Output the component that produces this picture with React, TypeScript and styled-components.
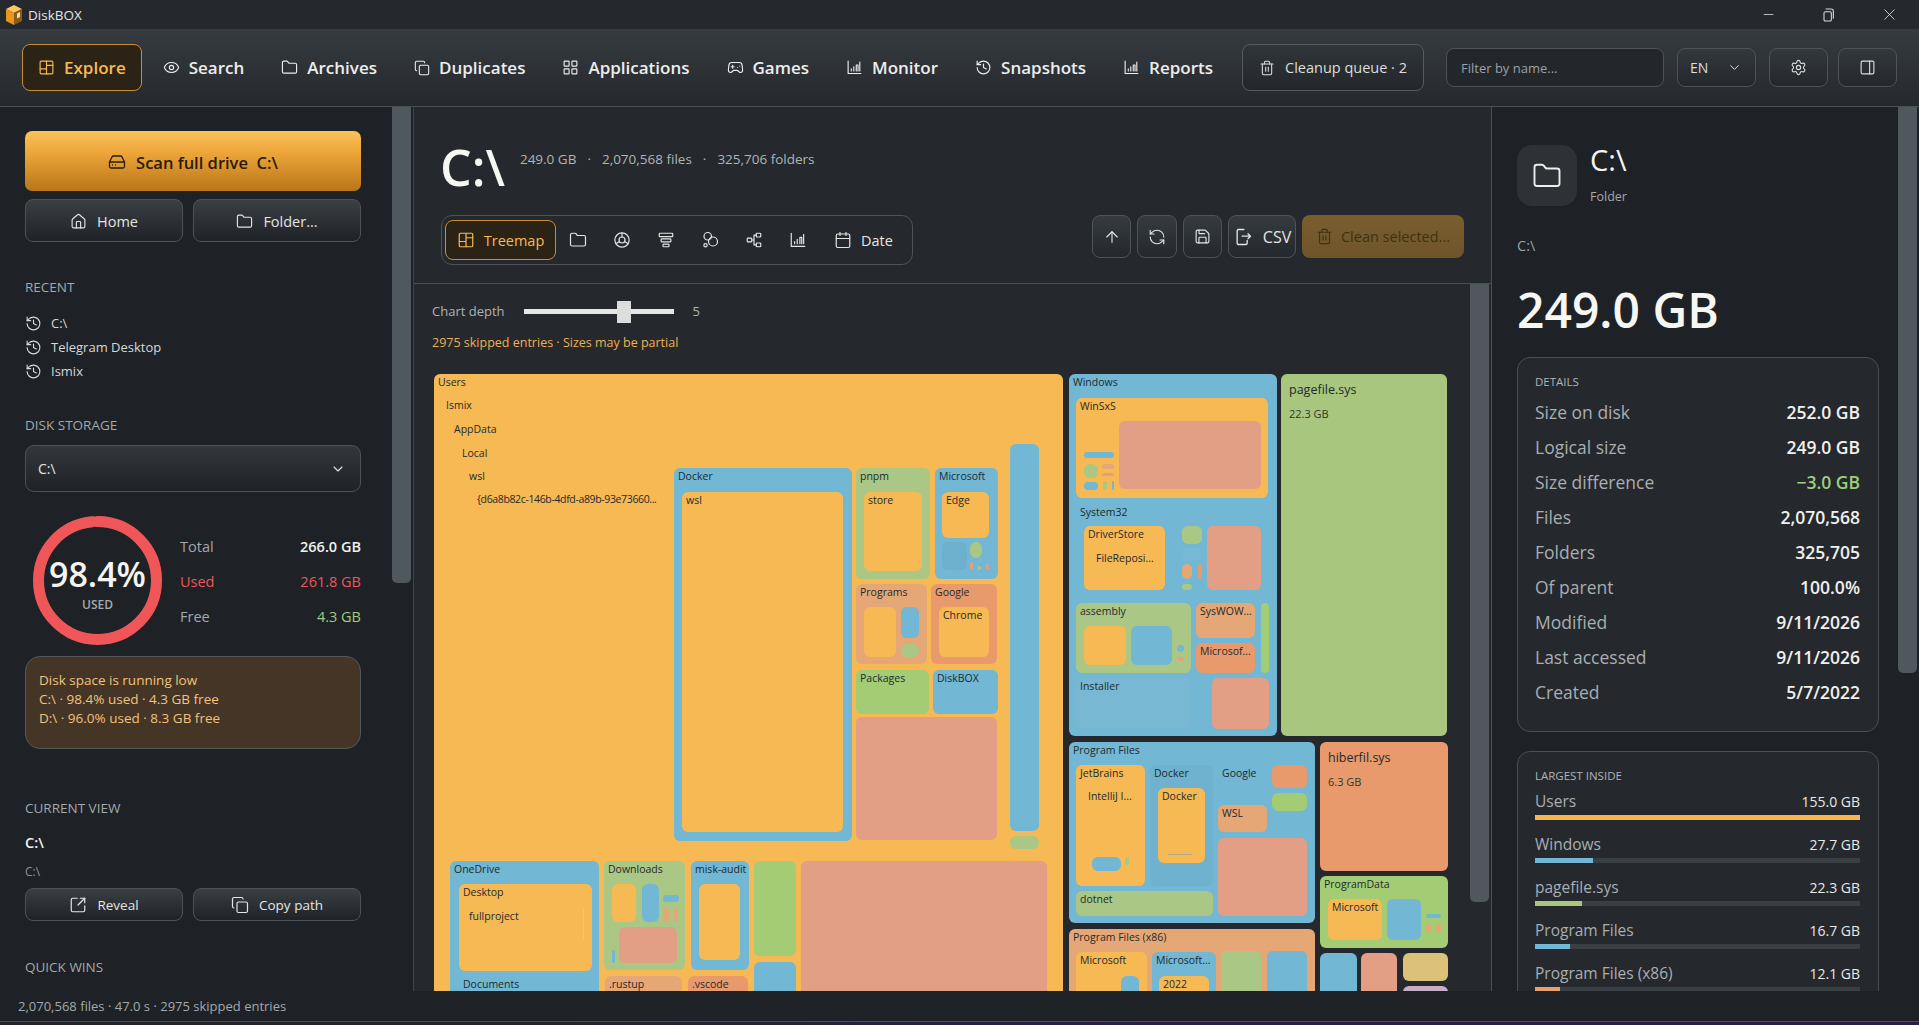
import React from 'react';
import styled, { createGlobalStyle } from 'styled-components';
import {
  ArrowUp, Calendar, ChevronDown, Copy, Eye, Folder, Gamepad2, HardDrive, History, Home, LayoutGrid,
  Minus, PanelRight, RefreshCcw, Save, Settings, SquareArrowOutUpRight, Trash2, X,
} from 'lucide-react';

const GlobalStyle = createGlobalStyle`
  html, body { margin: 0; padding: 0; height: 100%; background: #1e2125; overflow: hidden; }
  body { font-family: "Open Sans", "Noto Sans", sans-serif; color: #e8e8e6; }
  * { box-sizing: border-box; }
`;

const Shell = styled.div`
  display: flex;
  flex-direction: column;
  height: 100vh;
  overflow: hidden;
`;

const TitleBar = styled.div`
  height: 29px;
  flex: none;
  display: flex;
  align-items: center;
  background: #25292d;
  padding-left: 5px;
`;

const AppName = styled.span`
  margin-left: 5px;
  font-size: 13.5px;
  color: #e4e6e6;
`;

const WindowControls = styled.div`
  margin-left: auto;
  display: flex;
  align-items: center;
  gap: 44px;
  padding-right: 20px;
  color: #d9dcdd;
`;

const NavBar = styled.nav`
  height: 78px;
  flex: none;
  display: flex;
  align-items: center;
  gap: 5px;
  padding: 0 22px;
  background: linear-gradient(180deg, #363b40 0%, #25292d 100%);
  border-bottom: 1px solid #4a4f54;
`;

const NavItem = styled.div<{ $active?: boolean }>`
  height: 47px;
  display: flex;
  align-items: center;
  gap: 9px;
  padding: 0 15px;
  border-radius: 8px;
  font-size: 17px;
  font-weight: 600;
  white-space: nowrap;
  color: ${p => (p.$active ? '#f8b955' : '#eceded')};
  background: ${p => (p.$active ? '#2a2316' : 'transparent')};
  border: 1px solid ${p => (p.$active ? '#c98d35' : 'transparent')};
  svg { flex: none; }
`;

const QueueButton = styled.div`
  height: 47px;
  width: 182px;
  margin-left: auto;
  display: flex;
  align-items: center;
  justify-content: center;
  gap: 10px;
  border-radius: 8px;
  border: 1px solid #565b60;
  font-size: 14.5px;
  color: #dcdede;
  background: linear-gradient(180deg, #30353a 0%, #23272b 100%);
`;

const FilterInput = styled.div`
  width: 218px;
  height: 39px;
  margin-left: 17px;
  display: flex;
  align-items: center;
  padding-left: 14px;
  border-radius: 8px;
  border: 1px solid #4e5358;
  background: #23262b;
  font-size: 13px;
  color: #9ba0a4;
`;

const LangSelect = styled.div`
  width: 79px;
  height: 39px;
  margin-left: 8px;
  display: flex;
  align-items: center;
  justify-content: space-between;
  padding: 0 13px 0 12px;
  border-radius: 8px;
  border: 1px solid #4e5358;
  background: linear-gradient(180deg, #33383d 0%, #24282c 100%);
  font-size: 14px;
  color: #dcdede;
`;

const SquareTool = styled.div<{ $gap: number }>`
  width: 59px;
  height: 39px;
  margin-left: ${p => p.$gap}px;
  display: flex;
  align-items: center;
  justify-content: center;
  border-radius: 8px;
  border: 1px solid #4e5358;
  background: linear-gradient(180deg, #33383d 0%, #24282c 100%);
  color: #dcdede;
`;

const Body = styled.div`
  flex: 1;
  min-height: 0;
  display: flex;
`;

const Scrollbar = styled.div<{ $top?: number; $height: number }>`
  position: absolute;
  right: 2px;
  top: ${p => p.$top ?? 0}px;
  width: 19px;
  height: ${p => p.$height}px;
  background: #50575d;
  border-radius: 0 0 5px 5px;
`;

const Sidebar = styled.aside`
  position: relative;
  width: 413px;
  flex: none;
  overflow: hidden;
  background: #1e2125;
  padding: 24px 52px 0 25px;
`;

const ScanButton = styled.div`
  height: 60px;
  padding-top: 2px;
  display: flex;
  align-items: center;
  justify-content: center;
  gap: 10px;
  border-radius: 7px;
  background: linear-gradient(180deg, #fac25c 0%, #eda63a 35%, #b97618 100%);
  color: #2b1a04;
  font-size: 16.5px;
  font-weight: 600;
`;

const ButtonRow = styled.div`
  display: grid;
  grid-template-columns: 158px 168px;
  gap: 10px;
  margin-top: 8px;
`;

const GhostButton = styled.div<{ $small?: boolean }>`
  height: ${p => (p.$small ? 33 : 43)}px;
  padding-top: 1px;
  display: flex;
  align-items: center;
  justify-content: center;
  gap: 10px;
  border-radius: 8px;
  border: 1px solid #4e5358;
  background: linear-gradient(180deg, #3a3f44 0%, #1f2226 100%);
  font-size: ${p => (p.$small ? 13.5 : 14.5)}px;
  color: #e3e5e5;
`;

const SectionLabel = styled.div<{ $top: number }>`
  margin-top: ${p => p.$top}px;
  font-size: 13.5px;
  line-height: 18px;
  font-weight: 500;
  color: #a3a9ac;
`;

const RecentList = styled.div`
  margin-top: 15px;
  display: flex;
  flex-direction: column;
`;

const RecentRow = styled.div`
  height: 24px;
  display: flex;
  align-items: center;
  gap: 9px;
  font-size: 13px;
  color: #d6d9d9;
  svg { flex: none; margin-left: 0; }
`;

const DriveSelect = styled.div`
  height: 47px;
  margin-top: 11px;
  display: flex;
  align-items: center;
  justify-content: space-between;
  padding: 0 14px 0 12px;
  border-radius: 9px;
  border: 1px solid #4e5358;
  background: linear-gradient(180deg, #33383d 0%, #1f2226 100%);
  font-size: 14px;
  color: #e3e5e5;
`;

const DiskRow = styled.div`
  display: flex;
  align-items: center;
  margin-top: 24px;
  height: 129px;
`;

const Ring = styled.div`
  position: relative;
  width: 129px;
  height: 129px;
  margin-left: 8px;
  flex: none;
`;

const RingText = styled.div`
  position: absolute;
  inset: 0;
  display: flex;
  flex-direction: column;
  align-items: center;
  padding-top: 36px;
`;

const RingValue = styled.div`
  font-size: 34px;
  line-height: 44px;
  font-weight: 600;
  color: #f4f4f2;
`;

const RingCaption = styled.div`
  margin-top: 1px;
  font-size: 12px;
  line-height: 16px;
  font-weight: 600;
  color: #a3a9ac;
`;

const DiskStats = styled.div`
  flex: 1;
  margin: 2px 0 0 18px;
  display: flex;
  flex-direction: column;
  gap: 16px;
`;

const DiskStat = styled.div<{ $tone?: string; $value?: string }>`
  display: flex;
  justify-content: space-between;
  font-size: 14.5px;
  line-height: 19px;
  color: ${p => p.$tone ?? '#a3a9ac'};
  b { font-weight: ${p => (p.$value ? 400 : 600)}; color: ${p => p.$value ?? '#f0f0ee'}; }
`;

const LowDiskBox = styled.div`
  margin-top: 11px;
  height: 93px;
  padding: 14px 13px;
  border-radius: 15px;
  border: 1px solid #53585b;
  background: #443527;
  font-size: 13.5px;
  line-height: 19px;
  font-weight: 500;
  color: #f3c27c;
`;

const ViewName = styled.div`
  margin-top: 16px;
  font-size: 14.5px;
  line-height: 20px;
  font-weight: 600;
  color: #f2f2f0;
`;

const ViewPath = styled.div`
  margin-top: 11px;
  font-size: 12px;
  line-height: 16px;
  color: #8e9498;
`;

const Center = styled.main`
  position: relative;
  width: 1079px;
  flex: none;
  display: flex;
  flex-direction: column;
  background: #25282c;
  border-left: 1px solid #3e4347;
  border-right: 1px solid #4a4f54;
`;

const CenterHeader = styled.header`
  height: 177px;
  flex: none;
  padding: 33px 27px 0 27px;
  border-bottom: 1px solid #4a4f54;
`;

const TitleRow = styled.div`
  display: flex;
  height: 75px;
`;

const BigPath = styled.h1`
  margin: 2px 0 0 -1px;
  font-size: 50px;
  line-height: 50px;
  font-weight: 600;
  color: #f6f6f3;
`;

const MetaRow = styled.div`
  margin: 10px 0 0 15px;
  display: flex;
  gap: 11px;
  font-size: 13.5px;
  line-height: 18px;
  color: #b0b5b8;
`;

const ToolRow = styled.div`
  display: flex;
  justify-content: space-between;
  align-items: flex-start;
`;

const ViewTabs = styled.div`
  width: 472px;
  height: 50px;
  display: flex;
  align-items: center;
  padding: 0 3px;
  border-radius: 11px;
  border: 1px solid #4e5358;
`;

const ViewTab = styled.div<{ $active?: boolean }>`
  height: 40px;
  width: ${p => (p.$active ? '111px' : '44px')};
  flex: none;
  display: flex;
  align-items: center;
  justify-content: center;
  gap: 9px;
  border-radius: 8px;
  font-size: 14.5px;
  color: ${p => (p.$active ? '#f8b955' : '#e3e5e5')};
  background: ${p => (p.$active ? '#2a2316' : 'transparent')};
  border: 1px solid ${p => (p.$active ? '#c98d35' : 'transparent')};
`;

const DateTab = styled(ViewTab)`
  width: auto;
  margin-left: 13px;
`;

const ActionGroup = styled.div`
  display: flex;
  gap: 6px;
`;

const ActionButton = styled.div<{ $width: number }>`
  width: ${p => p.$width}px;
  height: 43px;
  display: flex;
  align-items: center;
  justify-content: center;
  gap: 10px;
  border-radius: 8px;
  border: 1px solid #4e5358;
  background: linear-gradient(180deg, #363b40 0%, #24282c 100%);
  font-size: 16px;
  color: #e3e5e5;
`;

const CleanButton = styled.div`
  width: 162px;
  height: 43px;
  display: flex;
  align-items: center;
  justify-content: center;
  gap: 8px;
  border-radius: 8px;
  background: linear-gradient(180deg, #7a5e30 0%, #6e5429 100%);
  font-size: 14.5px;
  color: #3f3214;
`;

const ChartArea = styled.div`
  flex: 1;
  min-height: 0;
  overflow: hidden;
  padding: 17px 0 0 18px;
`;

const DepthRow = styled.div`
  height: 20px;
  display: flex;
  align-items: center;
  font-size: 13px;
  color: #aeb3b6;
`;

const DepthTrack = styled.div`
  position: relative;
  width: 150px;
  height: 5px;
  margin: 0 19px 0 19px;
  background: #e6e7e5;
`;

const DepthThumb = styled.div`
  position: absolute;
  left: 93px;
  top: -8px;
  width: 14px;
  height: 22px;
  background: #dcdedc;
`;

const PartialNote = styled.div`
  margin-top: 12px;
  height: 20px;
  line-height: 20px;
  font-size: 12.5px;
  color: #eeb052;
`;

const Canvas = styled.div`
  position: relative;
  margin: 21px 0 0 2px;
  width: 1020px;
  height: 700px;
`;

type NodeBoxProps = { $x: number; $y: number; $w: number; $h: number; $c: string };

const NodeBox = styled.div.attrs<NodeBoxProps>(p => ({
  style: { left: p.$x, top: p.$y, width: p.$w, height: p.$h, background: p.$c },
}))<NodeBoxProps>`
  position: absolute;
  border-radius: 6px;
  overflow: hidden;
`;

const NodeLabel = styled.div<{ $big?: boolean; $tight?: boolean }>`
  padding: ${p => (p.$big ? '8px 8px' : '0 4px')};
  font-size: ${p => (p.$big ? '12.5px' : '10.5px')};
  letter-spacing: ${p => (p.$tight ? '-0.36px' : '0')};
  line-height: 16px;
  white-space: nowrap;
  color: #1f2a2c;
`;

const NodeSize = styled.div`
  padding: 0 8px;
  margin-top: 0;
  font-size: 11px;
  line-height: 16px;
  color: #2b3a28;
`;

const Inspector = styled.aside`
  position: relative;
  flex: 1;
  min-width: 0;
  overflow: hidden;
  background: #1e2125;
  padding: 38px 40px 0 25px;
`;

const InfoHead = styled.div`
  display: flex;
  gap: 13px;
`;

const FolderTile = styled.div`
  width: 60px;
  height: 61px;
  display: flex;
  align-items: center;
  justify-content: center;
  border-radius: 15px;
  background: #2e3237;
  color: #eeeeec;
`;

const InfoName = styled.div`
  margin-top: -1px;
  font-size: 29px;
  line-height: 32px;
  font-weight: 500;
  color: #f4f4f2;
`;

const InfoKind = styled.div`
  margin-top: 12px;
  font-size: 12.5px;
  line-height: 18px;
  color: #a3a9ac;
`;

const InfoPath = styled.div`
  margin-top: 31px;
  font-size: 14.5px;
  line-height: 18px;
  color: #9ba0a4;
`;

const HugeSize = styled.div`
  margin-top: 23px;
  font-size: 48px;
  line-height: 64px;
  font-weight: 600;
  color: #f6f6f3;
`;

const Card = styled.section<{ $height: number; $gap: number }>`
  height: ${p => p.$height}px;
  margin-top: ${p => p.$gap}px;
  padding: 16px 18px 0 17px;
  border-radius: 13px;
  border: 1px solid #4a4f54;
  background: #25282c;
`;

const CardTitle = styled.div`
  font-size: 11.5px;
  line-height: 16px;
  font-weight: 500;
  color: #b0b5b8;
`;

const DetailList = styled.div`
  margin-top: 4px;
`;

const DetailRow = styled.div<{ $tone?: string }>`
  height: 35px;
  display: flex;
  align-items: center;
  justify-content: space-between;
  font-size: 17.5px;
  color: #a9aeb1;
  b { font-weight: 600; font-size: 17.5px; color: ${p => p.$tone ?? '#f0f0ee'}; }
`;

const SizeList = styled.div`
  margin-top: 7px;
`;

const SizeRow = styled.div`
  height: 43px;
`;

const SizeHead = styled.div`
  height: 24px;
  padding-bottom: 4px;
  display: flex;
  align-items: center;
  justify-content: space-between;
  font-size: 15.5px;
  color: #a9aeb1;
  b { font-weight: 500; font-size: 14px; color: #e8e9e8; }
`;

const SizeTrack = styled.div`
  height: 5px;
  background: #3a3f43;
`;

const SizeFill = styled.div`
  height: 100%;
`;

const StatusBar = styled.footer`
  height: 30px;
  flex: none;
  display: flex;
  align-items: center;
  padding-left: 18px;
  background: #1e2125;
  font-size: 13px;
  color: #a3a9ac;
`;

const DesktopEdge = styled.div`
  height: 4px;
  flex: none;
  border-top: 1px solid #4a4f54;
  background: linear-gradient(90deg, #20242a 0%, #20242a 30%, #2a1d4c 60%, #2a1d4c 100%);
`;

const O = '#f6b953';
const B = '#72b7d3';
const G = '#abc785';
const L = '#a3cc74';
const S = '#e29f86';
const P = '#e5a775';
const R = '#e89a6c';
const NONE = 'transparent';

// x1, y1, x2, y2 in window pixels, colour, label
type Cell = [number, number, number, number, string, string?];

const cells: Cell[] = [
  [434, 374, 1063, 1100, O, 'Users'],
  [442, 397, 560, 413, NONE, 'Ismix'],
  [450, 421, 560, 437, NONE, 'AppData'],
  [458, 445, 560, 461, NONE, 'Local'],
  [465, 468, 560, 484, NONE, 'wsl'],
  [473, 491, 670, 507, NONE, '{d6a8b82c-146b-4dfd-a89b-93e73660...'],
  [674, 468, 852, 841, B, 'Docker'],
  [682, 492, 843, 832, O, 'wsl'],
  [856, 468, 930, 579, G, 'pnpm'],
  [864, 492, 922, 571, O, 'store'],
  [935, 468, 998, 579, B, 'Microsoft'],
  [942, 492, 989, 538, O, 'Edge'],
  [942, 542, 967, 570, '#6cb0ce'],
  [970, 542, 982, 558, G],
  [970, 562, 973, 570, S],
  [978, 566, 981, 570, G],
  [986, 564, 989, 570, S],
  [856, 584, 927, 664, P, 'Programs'],
  [864, 607, 896, 657, O],
  [901, 607, 919, 638, B],
  [901, 644, 919, 657, G],
  [931, 584, 997, 664, R, 'Google'],
  [939, 607, 989, 657, O, 'Chrome'],
  [856, 670, 929, 714, L, 'Packages'],
  [933, 670, 998, 714, B, 'DiskBOX'],
  [856, 717, 997, 840, S],
  [1010, 444, 1039, 831, B],
  [1010, 836, 1039, 849, G],
  [450, 861, 599, 1100, B, 'OneDrive'],
  [459, 884, 592, 971, O, 'Desktop'],
  [465, 908, 580, 924, NONE, 'fullproject'],
  [583, 908, 584, 940, '#e8c88a'],
  [459, 976, 592, 992, NONE, 'Documents'],
  [604, 861, 685, 970, G, 'Downloads'],
  [612, 884, 636, 922, O],
  [642, 884, 659, 922, B],
  [663, 895, 679, 902, B],
  [663, 908, 669, 922, P],
  [674, 908, 678, 922, P],
  [619, 927, 677, 963, S],
  [612, 950, 615, 963, B],
  [691, 861, 749, 970, B, 'misk-audit'],
  [699, 884, 740, 960, O],
  [605, 976, 682, 1100, P, '.rustup'],
  [688, 976, 748, 1100, R, '.vscode'],
  [754, 861, 796, 956, L],
  [754, 962, 796, 1100, B],
  [801, 861, 1047, 1100, S],
  [1069, 374, 1277, 736, B, 'Windows'],
  [1076, 398, 1268, 498, O, 'WinSxS'],
  [1119, 421, 1261, 489, S],
  [1084, 452, 1114, 458, B],
  [1084, 464, 1098, 478, G],
  [1102, 464, 1114, 469, P],
  [1102, 473, 1114, 476, S],
  [1084, 482, 1098, 490, B],
  [1103, 481, 1107, 490, G],
  [1112, 481, 1114, 490, B],
  [1076, 504, 1190, 520, NONE, 'System32'],
  [1084, 526, 1165, 590, O, 'DriverStore'],
  [1092, 550, 1165, 566, NONE, 'FileReposi...'],
  [1182, 526, 1202, 544, G],
  [1182, 548, 1202, 560, '#78bad6'],
  [1182, 564, 1192, 579, P],
  [1198, 564, 1202, 579, R],
  [1182, 584, 1192, 590, G],
  [1207, 526, 1261, 590, S],
  [1076, 603, 1191, 673, G, 'assembly'],
  [1084, 626, 1126, 665, O],
  [1131, 626, 1172, 665, B],
  [1177, 645, 1184, 652, B],
  [1177, 657, 1184, 661, S],
  [1196, 603, 1255, 638, P, 'SysWOW...'],
  [1196, 643, 1255, 673, R, 'Microsof...'],
  [1261, 603, 1269, 673, L],
  [1076, 678, 1191, 728, '#79b8d3', 'Installer'],
  [1212, 678, 1269, 729, S],
  [1069, 742, 1315, 923, B, 'Program Files'],
  [1076, 765, 1145, 886, O, 'JetBrains'],
  [1084, 788, 1145, 804, NONE, 'IntelliJ I...'],
  [1092, 857, 1121, 871, B],
  [1125, 857, 1129, 865, G],
  [1150, 765, 1213, 886, '#6eb2d0', 'Docker'],
  [1158, 788, 1205, 863, O, 'Docker'],
  [1168, 854, 1192, 855, '#b0a98a'],
  [1218, 765, 1267, 781, NONE, 'Google'],
  [1272, 765, 1307, 788, R],
  [1272, 793, 1307, 811, L],
  [1218, 805, 1267, 832, P, 'WSL'],
  [1218, 838, 1307, 916, S],
  [1076, 891, 1213, 916, G, 'dotnet'],
  [1069, 929, 1315, 1100, P, 'Program Files (x86)'],
  [1076, 952, 1147, 1100, O, 'Microsoft'],
  [1121, 976, 1139, 1100, B],
  [1152, 952, 1216, 1100, B, 'Microsoft...'],
  [1159, 976, 1209, 1100, O, '2022'],
  [1221, 951, 1261, 1100, G],
  [1267, 951, 1307, 1100, B],
  [1320, 876, 1448, 948, L, 'ProgramData'],
  [1328, 899, 1382, 940, O, 'Microsoft'],
  [1387, 899, 1421, 940, B],
  [1426, 914, 1441, 918, B],
  [1426, 924, 1431, 932, P],
  [1436, 924, 1441, 932, P],
  [1320, 953, 1357, 1100, B],
  [1361, 953, 1397, 1100, S],
  [1403, 953, 1448, 981, '#dcc278'],
  [1403, 986, 1448, 1100, '#c8aec4'],
];

const Svg = ({ size = 18, children }: { size?: number; children: React.ReactNode }) => (
  <svg width={size} height={size} viewBox="0 0 24 24" fill="none" stroke="currentColor" strokeWidth={1.6} strokeLinejoin="round" strokeLinecap="round">
    {children}
  </svg>
);

const TreemapIcon = ({ size }: { size?: number }) => (
  <Svg size={size}>
    <rect x="3" y="3" width="18" height="18" rx="1.5" />
    <path d="M12 3v18M3 14h9M12 9h9" />
  </Svg>
);
const ChartIcon = ({ size }: { size?: number }) => (
  <Svg size={size}>
    <path d="M3 3v17.5h18M7.5 17v-3M11 17v-6M14.5 17V8.5h2.5V17M19.5 17V4.5" />
  </Svg>
);
const SunburstIcon = () => (
  <Svg>
    <circle cx="12" cy="12" r="9.5" />
    <circle cx="12" cy="12" r="4" />
    <path d="M12 2.5V8M8.5 14l-4.7 3M15.5 14l4.7 3" />
  </Svg>
);
const FunnelIcon = () => (
  <Svg>
    <rect x="3" y="3" width="18" height="4.5" rx="1" />
    <rect x="5.5" y="10.5" width="13" height="4" rx="1" />
    <rect x="8" y="17.5" width="8" height="3.5" rx="1" />
  </Svg>
);
const BubblesIcon = () => (
  <Svg>
    <circle cx="9" cy="7" r="5" />
    <circle cx="16" cy="14" r="6" />
    <circle cx="6" cy="19" r="2.2" />
  </Svg>
);
const NodesIcon = () => (
  <Svg>
    <rect x="3" y="9.5" width="6" height="5" rx="1" />
    <rect x="15" y="3" width="6" height="5" rx="1" />
    <rect x="15" y="16" width="6" height="5" rx="1" />
    <path d="M9 12h3M12 5.5v13M12 5.5h3M12 18.5h3" />
  </Svg>
);
const ExportIcon = () => (
  <Svg size={20}>
    <path d="M13 3H6.5A1.5 1.5 0 0 0 5 4.5v15A1.5 1.5 0 0 0 6.5 21h9a1.5 1.5 0 0 0 1.5-1.5V16" />
    <path d="M11 11h10M18 8l3 3-3 3" />
  </Svg>
);
const RestoreIcon = () => (
  <Svg size={16}>
    <rect x="6" y="7" width="11" height="14" rx="2" />
    <path d="M9 3h8a3 3 0 0 1 3 3v11" />
  </Svg>
);
const Logo = () => (
  <svg width="18" height="22" viewBox="0 0 18 22">
    <path d="M9 1l8 4-8 4-8-4z" fill="#ffc65a" />
    <path d="M1 5l8 4v12l-8-4z" fill="#e8961f" />
    <path d="M17 5l-8 4v12l8-4z" fill="#8a5a18" />
    <path d="M12 9.5l3-1.5v5l-3 1.5z" fill="#f6dca0" />
  </svg>
);

const navItems = [
  { label: 'Search', icon: <Eye size={17} strokeWidth={1.6} /> },
  { label: 'Archives', icon: <Folder size={17} strokeWidth={1.6} /> },
  { label: 'Duplicates', icon: <Copy size={16} strokeWidth={1.6} /> },
  { label: 'Applications', icon: <LayoutGrid size={17} strokeWidth={1.6} /> },
  { label: 'Games', icon: <Gamepad2 size={17} strokeWidth={1.6} /> },
  { label: 'Monitor', icon: <ChartIcon size={17} /> },
  { label: 'Snapshots', icon: <History size={17} strokeWidth={1.6} /> },
  { label: 'Reports', icon: <ChartIcon size={17} /> },
];

const details: { label: string; value: string; tone?: string }[] = [
  { label: 'Size on disk', value: '252.0 GB' },
  { label: 'Logical size', value: '249.0 GB' },
  { label: 'Size difference', value: '−3.0 GB', tone: '#9fce7c' },
  { label: 'Files', value: '2,070,568' },
  { label: 'Folders', value: '325,705' },
  { label: 'Of parent', value: '100.0%' },
  { label: 'Modified', value: '9/11/2026' },
  { label: 'Last accessed', value: '9/11/2026' },
  { label: 'Created', value: '5/7/2022' },
];

const largest = [
  { name: 'Users', size: '155.0 GB', pct: 100, color: '#f6b64f' },
  { name: 'Windows', size: '27.7 GB', pct: 17.9, color: '#72b7d3' },
  { name: 'pagefile.sys', size: '22.3 GB', pct: 14.4, color: '#a9c67f' },
  { name: 'Program Files', size: '16.7 GB', pct: 10.8, color: '#72b7d3' },
  { name: 'Program Files (x86)', size: '12.1 GB', pct: 7.7, color: '#e8a06e' },
];

const RING_R = 59;
const RING_LEN = 2 * Math.PI * RING_R;

export default function App() {
  return (
    <Shell>
      <GlobalStyle />
      <TitleBar>
        <Logo />
        <AppName>DiskBOX</AppName>
        <WindowControls>
          <Minus size={15} strokeWidth={1.3} />
          <RestoreIcon />
          <X size={19} strokeWidth={1.1} />
        </WindowControls>
      </TitleBar>

      <NavBar>
        <NavItem $active><TreemapIcon size={17} />Explore</NavItem>
        {navItems.map(n => (
          <NavItem key={n.label}>{n.icon}{n.label}</NavItem>
        ))}
        <QueueButton><Trash2 size={16} strokeWidth={1.6} />Cleanup queue · 2</QueueButton>
        <FilterInput>Filter by name...</FilterInput>
        <LangSelect>EN<ChevronDown size={15} strokeWidth={1.6} /></LangSelect>
        <SquareTool $gap={8}><Settings size={17} strokeWidth={1.6} /></SquareTool>
        <SquareTool $gap={5}><PanelRight size={17} strokeWidth={1.6} /></SquareTool>
      </NavBar>

      <Body>
        <Sidebar>
          <ScanButton><HardDrive size={18} strokeWidth={1.7} />Scan full drive &nbsp;C:\</ScanButton>
          <ButtonRow>
            <GhostButton><Home size={17} strokeWidth={1.6} />Home</GhostButton>
            <GhostButton><Folder size={17} strokeWidth={1.6} />Folder...</GhostButton>
          </ButtonRow>
          <SectionLabel $top={36}>RECENT</SectionLabel>
          <RecentList>
            {['C:\\', 'Telegram Desktop', 'Ismix'].map(r => (
              <RecentRow key={r}><History size={17} strokeWidth={1.6} />{r}</RecentRow>
            ))}
          </RecentList>
          <SectionLabel $top={33}>DISK STORAGE</SectionLabel>
          <DriveSelect>C:\<ChevronDown size={16} strokeWidth={1.6} /></DriveSelect>
          <DiskRow>
            <Ring>
              <svg width="129" height="129" viewBox="0 0 129 129">
                <circle cx="64.5" cy="64.5" r={RING_R} fill="none" stroke="#3a3f43" strokeWidth="11" />
                <circle
                  cx="64.5" cy="64.5" r={RING_R} fill="none" stroke="#f05558" strokeWidth="11" strokeLinecap="round"
                  strokeDasharray={`${RING_LEN * 0.984} ${RING_LEN}`} transform="rotate(-90 64.5 64.5)"
                />
              </svg>
              <RingText>
                <RingValue>98.4%</RingValue>
                <RingCaption>USED</RingCaption>
              </RingText>
            </Ring>
            <DiskStats>
              <DiskStat><span>Total</span><b>266.0 GB</b></DiskStat>
              <DiskStat $tone="#f0555a" $value="#f0555a"><span>Used</span><b>261.8 GB</b></DiskStat>
              <DiskStat $value="#9fce7c"><span>Free</span><b>4.3 GB</b></DiskStat>
            </DiskStats>
          </DiskRow>
          <LowDiskBox>
            Disk space is running low<br />
            C:\ · 98.4% used · 4.3 GB free<br />
            D:\ · 96.0% used · 8.3 GB free
          </LowDiskBox>
          <SectionLabel $top={50}>CURRENT VIEW</SectionLabel>
          <ViewName>C:\</ViewName>
          <ViewPath>C:\</ViewPath>
          <ButtonRow>
            <GhostButton $small><SquareArrowOutUpRight size={18} strokeWidth={1.6} />Reveal</GhostButton>
            <GhostButton $small><Copy size={18} strokeWidth={1.6} />Copy path</GhostButton>
          </ButtonRow>
          <SectionLabel $top={37}>QUICK WINS</SectionLabel>
          <Scrollbar $height={476} />
        </Sidebar>

        <Center>
          <CenterHeader>
            <TitleRow>
              <BigPath>C:\</BigPath>
              <MetaRow>
                <span>249.0 GB</span><span>·</span><span>2,070,568 files</span><span>·</span><span>325,706 folders</span>
              </MetaRow>
            </TitleRow>
            <ToolRow>
              <ViewTabs>
                <ViewTab $active><TreemapIcon size={18} />Treemap</ViewTab>
                <ViewTab><Folder size={18} strokeWidth={1.6} /></ViewTab>
                <ViewTab><SunburstIcon /></ViewTab>
                <ViewTab><FunnelIcon /></ViewTab>
                <ViewTab><BubblesIcon /></ViewTab>
                <ViewTab><NodesIcon /></ViewTab>
                <ViewTab><ChartIcon /></ViewTab>
                <DateTab><Calendar size={18} strokeWidth={1.6} />Date</DateTab>
              </ViewTabs>
              <ActionGroup>
                <ActionButton $width={39}><ArrowUp size={18} strokeWidth={1.5} /></ActionButton>
                <ActionButton $width={40}><RefreshCcw size={18} strokeWidth={1.5} /></ActionButton>
                <ActionButton $width={39}><Save size={17} strokeWidth={1.6} /></ActionButton>
                <ActionButton $width={68}><ExportIcon />CSV</ActionButton>
                <CleanButton><Trash2 size={17} strokeWidth={1.6} />Clean selected...</CleanButton>
              </ActionGroup>
            </ToolRow>
          </CenterHeader>
          <ChartArea>
            <DepthRow>
              Chart depth
              <DepthTrack><DepthThumb /></DepthTrack>
              5
            </DepthRow>
            <PartialNote>2975 skipped entries · Sizes may be partial</PartialNote>
            <Canvas>
              {cells.map(([x1, y1, x2, y2, c, label], i) => (
                <NodeBox key={i} $x={x1 - 434} $y={y1 - 374} $w={x2 - x1} $h={y2 - y1} $c={c}>
                  {label && <NodeLabel $tight={label.length > 30}>{label}</NodeLabel>}
                </NodeBox>
              ))}
              <NodeBox $x={847} $y={0} $w={166} $h={362} $c="#a9c67f">
                <NodeLabel $big>pagefile.sys</NodeLabel>
                <NodeSize>22.3 GB</NodeSize>
              </NodeBox>
              <NodeBox $x={886} $y={368} $w={128} $h={129} $c={R}>
                <NodeLabel $big>hiberfil.sys</NodeLabel>
                <NodeSize>6.3 GB</NodeSize>
              </NodeBox>
            </Canvas>
          </ChartArea>
          <Scrollbar $top={177} $height={618} />
        </Center>

        <Inspector>
          <InfoHead>
            <FolderTile><Folder size={30} strokeWidth={1.5} /></FolderTile>
            <div>
              <InfoName>C:\</InfoName>
              <InfoKind>Folder</InfoKind>
            </div>
          </InfoHead>
          <InfoPath>C:\</InfoPath>
          <HugeSize>249.0 GB</HugeSize>
          <Card $height={375} $gap={15}>
            <CardTitle>DETAILS</CardTitle>
            <DetailList>
              {details.map(d => (
                <DetailRow key={d.label} $tone={d.tone}><span>{d.label}</span><b>{d.value}</b></DetailRow>
              ))}
            </DetailList>
          </Card>
          <Card $height={300} $gap={19}>
            <CardTitle>LARGEST INSIDE</CardTitle>
            <SizeList>
              {largest.map(l => (
                <SizeRow key={l.name}>
                  <SizeHead><span>{l.name}</span><b>{l.size}</b></SizeHead>
                  <SizeTrack>
                    <SizeFill style={{ width: `${l.pct}%`, background: l.color }} />
                  </SizeTrack>
                </SizeRow>
              ))}
            </SizeList>
          </Card>
          <Scrollbar $height={566} $top={0} />
        </Inspector>
      </Body>

      <StatusBar>2,070,568 files · 47.0 s · 2975 skipped entries</StatusBar>
      <DesktopEdge />
    </Shell>
  );
}
